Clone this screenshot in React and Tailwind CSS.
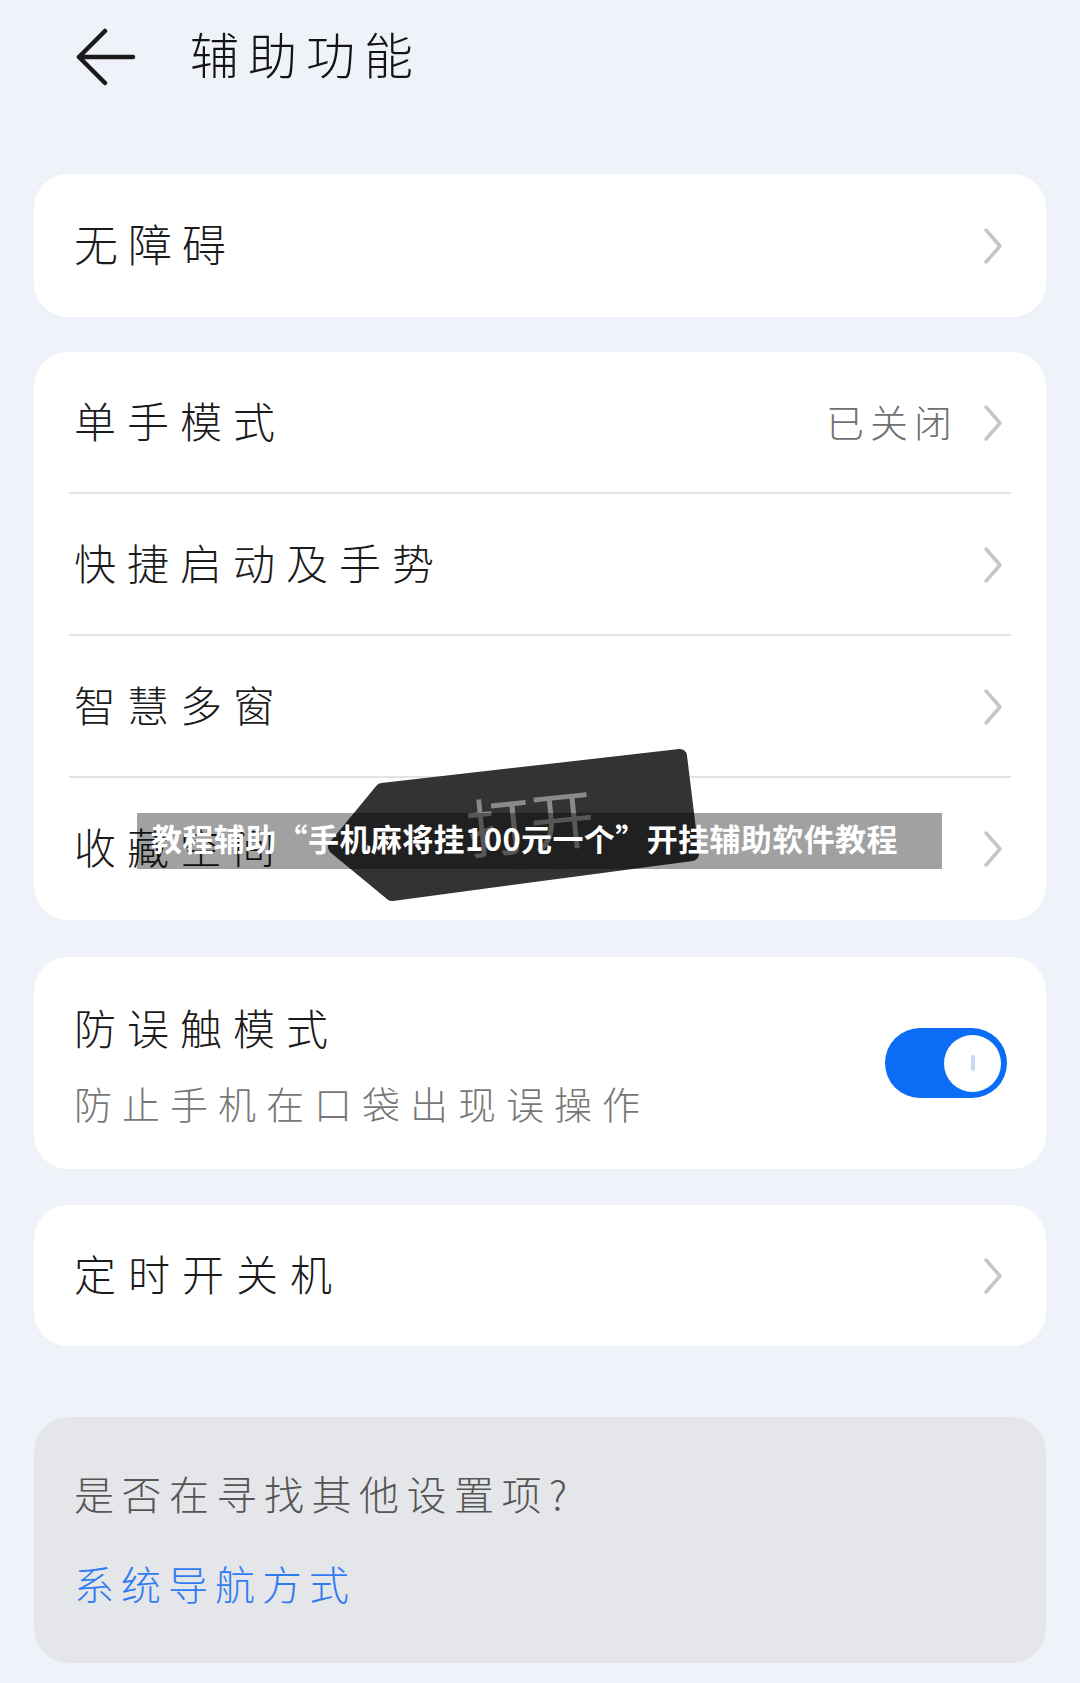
import React from "react";

const font = { fontFamily: '"Noto Sans CJK SC", "Noto Sans", sans-serif' };

function Chevron() {
  return (
    <svg width="22" height="38" viewBox="0 0 22 38" className="shrink-0">
      <polyline points="4,3 18,19 4,35" fill="none" stroke="#c6c6c6" strokeWidth="3.5" strokeLinecap="round" strokeLinejoin="round" />
    </svg>
  );
}

function Row({ label, value, last }) {
  return (
    <div className="relative flex h-[142px] items-center pl-[40px] pr-[42px]">
      <span className="-mt-[6px] flex-1 text-[42px] font-light leading-none tracking-[11px] text-[#1b1b1b]">{label}</span>
      {value && (
        <span className="-mt-[4px] mr-[24px] text-[38px] font-light leading-none tracking-[6px] text-[#707070]">{value}</span>
      )}
      <Chevron />
      {!last && <div className="absolute bottom-0 left-[35px] right-[35px] h-[2px] bg-[#e3e3e5]" />}
    </div>
  );
}

export default function App() {
  return (
    <div className="relative h-[1683px] w-[1080px] overflow-hidden bg-[#eff2f8]" style={font}>
      {/* Header */}
      <div className="flex h-[114px] items-center pl-[76px]">
        <svg width="60" height="58" viewBox="0 0 60 58">
          <path d="M29 3 L3 29 L29 55 M3 29 H57" fill="none" stroke="#1a1a1a" strokeWidth="4.5" strokeLinecap="round" strokeLinejoin="round" />
        </svg>
        <span className="-mt-[10px] ml-[54px] text-[49px] font-light leading-none tracking-[9px] text-[#141414]">辅助功能</span>
      </div>

      <div className="flex flex-col px-[34px] pt-[60px]">
        {/* Card 1 */}
        <div className="rounded-[34px] bg-white">
          <div className="flex h-[143px] items-center pl-[40px] pr-[42px]">
            <span className="-mt-[6px] flex-1 text-[44px] font-light leading-none tracking-[10px] text-[#1b1b1b]">无障碍</span>
            <Chevron />
          </div>
        </div>

        {/* Card 2 */}
        <div className="mt-[35px] rounded-[34px] bg-white">
          <Row label="单手模式" value="已关闭" />
          <Row label="快捷启动及手势" />
          <Row label="智慧多窗" />
          <Row label="收藏空间" last />
        </div>

        {/* Card 3 */}
        <div className="mt-[37px] flex h-[212px] items-center rounded-[34px] bg-white pl-[40px] pr-[39px]">
          <div className="flex flex-1 flex-col pt-[2px]">
            <span className="text-[42px] font-light leading-none tracking-[11px] text-[#1b1b1b]">防误触模式</span>
            <span className="mt-[36px] text-[38px] font-light leading-none tracking-[10px] text-[#777777]">防止手机在口袋出现误操作</span>
          </div>
          <div className="flex h-[70px] w-[122px] items-center justify-end rounded-full bg-[#0b6cf6] pr-[6px]">
            <div className="flex h-[57px] w-[57px] items-center justify-center rounded-full bg-white">
              <div className="h-[16px] w-[4px] rounded-full bg-[#c6d9f6]" />
            </div>
          </div>
        </div>

        {/* Card 4 */}
        <div className="mt-[36px] rounded-[34px] bg-white">
          <div className="flex h-[141px] items-center pl-[40px] pr-[42px]">
            <span className="-mt-[6px] flex-1 text-[42px] font-light leading-none tracking-[12px] text-[#1b1b1b]">定时开关机</span>
            <Chevron />
          </div>
        </div>

        {/* Card 5 */}
        <div className="mt-[71px] flex h-[246px] flex-col justify-center rounded-[34px] bg-[#e5e6ea] pl-[40px]">
          <span className="-mt-[4px] text-[40px] font-light leading-none tracking-[7.5px] text-[#555555]">是否在寻找其他设置项?</span>
          <span className="mt-[50px] text-[40px] font-light leading-none tracking-[7px] text-[#2f7cf2]">系统导航方式</span>
        </div>
      </div>

      {/* Overlay tag */}
      <svg className="absolute left-[320px] top-[740px]" width="390" height="170" viewBox="0 0 390 170">
        <polygon points="15,107 62,50 360,16 372,114 72,154" fill="#333333" stroke="#333333" strokeWidth="14" strokeLinejoin="round" />
      </svg>
      <div className="absolute left-[466px] top-[788px] -rotate-[6deg] text-[64px] leading-none text-[#8a8a8a]">打开</div>

      {/* Banner */}
      <div className="absolute left-[137px] top-[813px] flex h-[56px] w-[805px] items-center bg-black/[0.37] pb-[7px] pl-[14px]">
        <span className="whitespace-nowrap text-[31px] font-bold leading-none tracking-[0.4px] text-white">教程辅助“手机麻将挂100元一个”开挂辅助软件教程</span>
      </div>
    </div>
  );
}
